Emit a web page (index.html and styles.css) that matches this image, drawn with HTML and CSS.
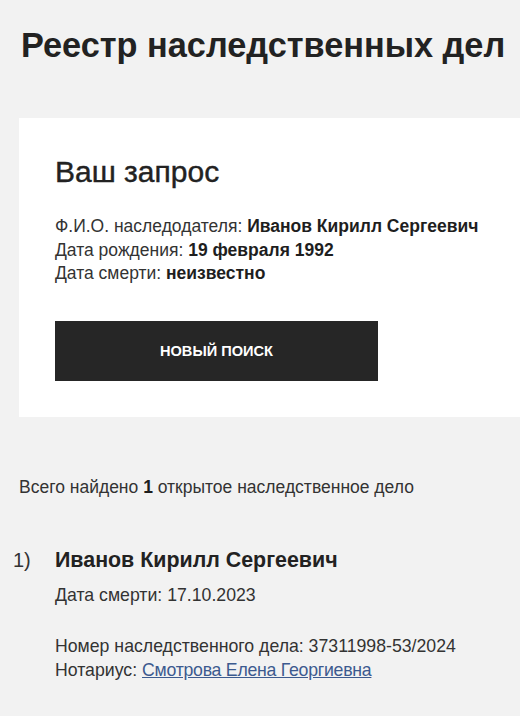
FILE: index.html
```html
<!DOCTYPE html>
<html lang="ru">
<head>
<meta charset="utf-8" />
<title>Реестр наследственных дел</title>
<link rel="stylesheet" href="styles.css">
</head>
<body>
<h1 class="page-title">Реестр наследственных дел</h1>

<div class="request-card">
	<h2 class="card-title">Ваш запрос</h2>
	<p class="info">
		Ф.И.О. наследодателя: <b>Иванов Кирилл Сергеевич</b><br/>
		Дата рождения: <b>19 февраля 1992</b><br/>
		Дата смерти: <b>неизвестно</b>
	</p>
	<a class="search-btn" href="#">НОВЫЙ ПОИСК</a>
</div>

<p class="total">Всего найдено <b>1</b> открытое наследственное дело</p>

<div class="case">
	<span class="case-num">1)</span>
	<div class="case-body">
		<h3 class="case-name">Иванов Кирилл Сергеевич</h3>
		<p class="case-line">Дата смерти: 17.10.2023</p>
		<p class="case-line case-gap">
			Номер наследственного дела: 37311998-53/2024<br/>
			Нотариус: <a href="#" class="notary">Смотрова Елена Георгиевна</a>
		</p>
	</div>
</div>
</body>
</html>
```

FILE: styles.css
```css
body {
	margin: 0;
	background: #f2f2f2;
	color: #222222;
	font-family: "Liberation Sans", Arial, sans-serif;
	overflow: hidden;
}
.page-title {
	margin: 0;
	padding: 25px 0 0 21px;
	font-size: 34.3px;
	font-weight: bold;
	line-height: 40px;
	white-space: nowrap;
	color: #222222;
}
.request-card {
	margin: 53px 0 0 19px;
	background: #ffffff;
	padding: 38px 36px 36px 36px;
}
.card-title {
	margin: 0;
	font-size: 30px;
	font-weight: normal;
	line-height: 32px;
	color: #222222;
	-webkit-text-stroke: 0.4px #222222;
}
.info {
	margin: 27px 0 0 0;
	font-size: 17.5px;
	line-height: 23.7px;
	color: #333333;
}
.info b {
	color: #1e1e1e;
}
.search-btn {
	display: flex;
	align-items: center;
	justify-content: center;
	width: 323px;
	height: 60px;
	margin-top: 35px;
	background: #262626;
	color: #ffffff;
	font-size: 14.6px;
	font-weight: bold;
	text-decoration: none;
}
.total {
	margin: 59px 0 0 19px;
	font-size: 17.5px;
	line-height: 22px;
	color: #333333;
}
.total b {
	color: #1e1e1e;
}
.case {
	display: flex;
	align-items: baseline;
	margin-top: 49px;
}
.case-num {
	width: 42px;
	padding-left: 13px;
	font-size: 20px;
	line-height: 26px;
	color: #333333;
}
.case-name {
	margin: 0;
	font-size: 21.4px;
	font-weight: bold;
	line-height: 26px;
	color: #222222;
}
.case-line {
	margin: 10px 0 0 0;
	font-size: 17.7px;
	line-height: 24px;
	color: #333333;
}
.case-gap {
	margin-top: 28px;
	line-height: 23.5px;
}
.notary {
	color: #3c5a8f;
	letter-spacing: -0.25px;
}
```
